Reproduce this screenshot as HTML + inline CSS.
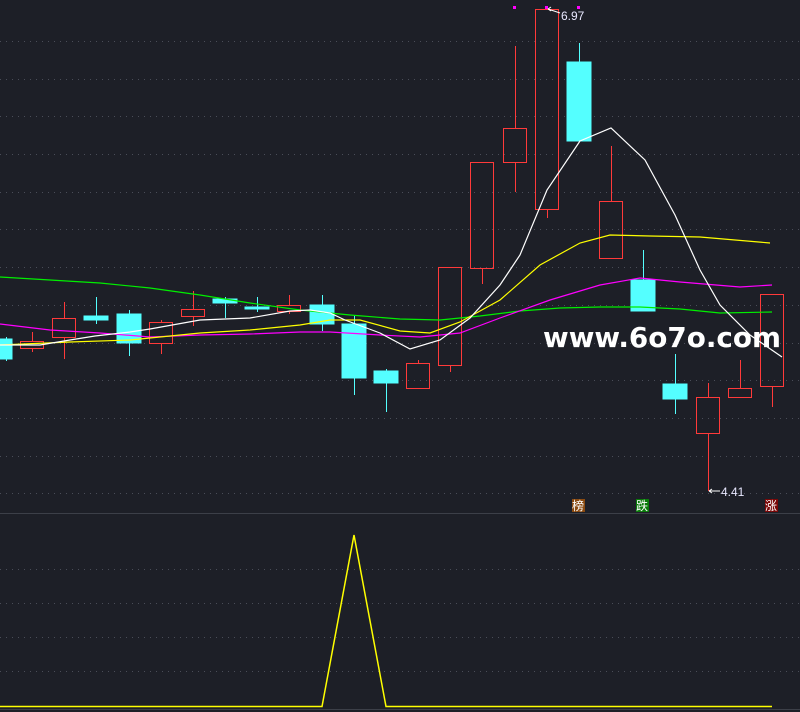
<!DOCTYPE html>
<html><head><meta charset="utf-8"><style>
html,body{margin:0;padding:0;background:#1d1f27;width:800px;height:712px;overflow:hidden}
svg{display:block}
</style></head><body>
<svg width="800" height="712" xmlns="http://www.w3.org/2000/svg" shape-rendering="crispEdges">
<rect width="800" height="712" fill="#1d1f27"/>
<g stroke="#4a4d58" stroke-dasharray="1 5" stroke-width="1">
<line x1="0" x2="800" y1="41.5" y2="41.5"/><line x1="0" x2="800" y1="79.5" y2="79.5"/>
<line x1="0" x2="800" y1="116.5" y2="116.5"/><line x1="0" x2="800" y1="154.5" y2="154.5"/>
<line x1="0" x2="800" y1="192.5" y2="192.5"/><line x1="0" x2="800" y1="229.5" y2="229.5"/>
<line x1="0" x2="800" y1="267.5" y2="267.5"/><line x1="0" x2="800" y1="305.5" y2="305.5"/>
<line x1="0" x2="800" y1="343.5" y2="343.5"/><line x1="0" x2="800" y1="380.5" y2="380.5"/>
<line x1="0" x2="800" y1="418.5" y2="418.5"/><line x1="0" x2="800" y1="456.5" y2="456.5"/>
<line x1="0" x2="800" y1="493.5" y2="493.5"/>
<line x1="0" x2="800" y1="569.5" y2="569.5"/><line x1="0" x2="800" y1="603.5" y2="603.5"/>
<line x1="0" x2="800" y1="637.5" y2="637.5"/><line x1="0" x2="800" y1="671.5" y2="671.5"/>
</g>
<line x1="0" x2="800" y1="513.5" y2="513.5" stroke="#3c3f48"/>
<line x1="0" x2="800" y1="709.5" y2="709.5" stroke="#3c3f48"/>
<!-- cyan candles -->
<g fill="#54ffff" stroke="#54ffff">
<line x1="6.5" x2="6.5" y1="337" y2="361"/><rect x="0" y="339" width="12" height="20"/>
<line x1="96.5" x2="96.5" y1="297" y2="324"/><rect x="84" y="316" width="24" height="4"/>
<line x1="129.5" x2="129.5" y1="310" y2="356"/><rect x="117" y="314" width="24" height="29"/>
<line x1="225.5" x2="225.5" y1="297" y2="318"/><rect x="213" y="299" width="24" height="4"/>
<line x1="257.5" x2="257.5" y1="297" y2="312"/><rect x="245" y="307" width="24" height="2"/>
<line x1="322.5" x2="322.5" y1="295" y2="331"/><rect x="310" y="305" width="24" height="19"/>
<line x1="354.5" x2="354.5" y1="316" y2="395"/><rect x="342" y="324" width="24" height="54"/>
<line x1="386.5" x2="386.5" y1="369" y2="412"/><rect x="374" y="371" width="24" height="12"/>
<line x1="579.5" x2="579.5" y1="43" y2="62"/><rect x="567" y="62" width="24" height="79"/>
<line x1="643.5" x2="643.5" y1="250" y2="280"/><rect x="631" y="280" width="24" height="31"/>
<line x1="675.5" x2="675.5" y1="354" y2="414"/><rect x="663" y="384" width="24" height="15"/>
</g>
<!-- red candles -->
<g fill="none" stroke="#ff3a3a">
<path d="M32.5,332V341.5M32.5,348.5V352"/><rect x="20.5" y="341.5" width="23" height="7"/>
<path d="M64.5,302V318.5M64.5,337.5V359"/><rect x="52.5" y="318.5" width="23" height="19"/>
<path d="M161.5,320V322.5M161.5,343.5V354"/><rect x="149.5" y="322.5" width="23" height="21"/>
<path d="M193.5,291V309.5M193.5,316.5V326"/><rect x="181.5" y="309.5" width="23" height="7"/>
<path d="M289.5,295V305.5M289.5,311.5V314"/><rect x="277.5" y="305.5" width="23" height="6"/>
<path d="M418.5,360V363.5"/><rect x="406.5" y="363.5" width="23" height="25"/>
<path d="M450.5,365.5V372"/><rect x="438.5" y="267.5" width="23" height="98"/>
<path d="M482.5,268.5V284"/><rect x="470.5" y="162.5" width="23" height="106"/>
<path d="M515.5,46V128.5M515.5,162.5V192"/><rect x="503.5" y="128.5" width="23" height="34"/>
<path d="M547.5,209.5V218"/><rect x="535.5" y="9.5" width="23" height="200"/>
<path d="M611.5,146V201.5"/><rect x="599.5" y="201.5" width="23" height="57"/>
<path d="M708.5,383V397.5M708.5,433.5V491"/><rect x="696.5" y="397.5" width="23" height="36"/>
<path d="M740.5,360V388.5"/><rect x="728.5" y="388.5" width="23" height="9"/>
<path d="M772.5,386.5V407"/><rect x="760.5" y="294.5" width="23" height="92"/>
</g>
<g fill="none" stroke-width="1.2" shape-rendering="auto">
<polyline stroke="#00ee00" points="0,277 50,280 100,283 150,288 200,295 250,303 300,310 350,315 400,319 440,320 480,316 520,311 560,308 600,307 640,307 680,309 720,313 772,312"/>
<polyline stroke="#ff00ff" points="0,324 50,330 100,333 150,337 200,335 250,334 300,332 330,332 380,335 420,337 460,333 500,318 550,300 600,285 640,278 680,282 740,287 772,285"/>
<polyline stroke="#ffff00" points="0,345 70,342 130,340 200,333 250,330 300,325 330,320 360,320 400,331 430,333 460,322 500,300 540,265 580,243 610,235 650,236 700,237 770,243"/>
<polyline stroke="#ffffff" points="0,345 40,345 70,340 95,336 130,332 150,329 200,320 250,318 290,311 310,310 330,313 345,320 380,333 410,349 440,340 470,318 500,285 520,255 547,190 580,141 611,128 645,160 675,215 700,270 720,305 750,335 782,357"/>
<polyline stroke="#ffff00" stroke-width="1.5" points="0,706.5 322,706.5 354,535 386,706.5 772,706.5"/>
</g>
<g fill="#ff00ff"><rect x="513" y="6" width="3" height="3"/><rect x="545" y="6" width="3" height="3"/><rect x="577" y="6" width="3" height="3"/></g>
<g stroke="#ffffff" fill="none" shape-rendering="auto"><path d="M548,9 L560,13 M548,9 l3,-2 M548,9 l3,2"/><path d="M709,491 L720,491 M709,491 l3,-2 M709,491 l3,2"/></g>
<g font-family="Liberation Sans, sans-serif" font-size="12" fill="#e8e8ff">
<text x="561" y="20">6.97</text><text x="721" y="496">4.41</text>
</g>
<text x="543" y="347" font-family="DejaVu Sans, Liberation Sans, sans-serif" font-weight="bold" font-size="28" fill="#ffffff" textLength="238" lengthAdjust="spacingAndGlyphs">www.6o7o.com</text>
<g font-family="Liberation Sans, Noto Sans CJK SC, sans-serif" font-size="12">
<rect x="572" y="499" width="13" height="13" fill="#8a4a10"/><text x="572" y="510" fill="#fff">榜</text>
<rect x="636" y="499" width="13" height="13" fill="#0a7a0a"/><text x="636" y="510" fill="#fff">跌</text>
<rect x="765" y="499" width="13" height="13" fill="#7a0808"/><text x="765" y="510" fill="#fff">涨</text>
</g>
</svg>
</body></html>
